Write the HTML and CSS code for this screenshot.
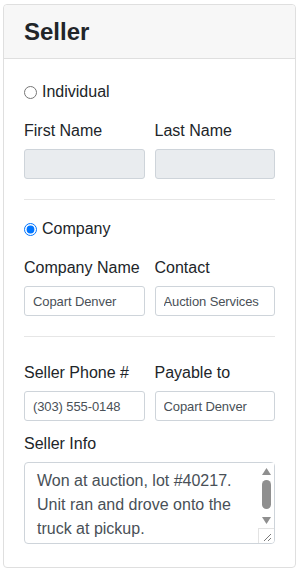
FILE: index.html
```html
<!DOCTYPE html>
<html lang="en">

<head>
  <meta charset="UTF-8" />
  <meta name="viewport" content="width=device-width, initial-scale=1" />
  <title>Seller</title>

  <link rel="stylesheet" href="styles.css">
</head>

<body>

  <div class="card">
    <div class="card-header">
      <h4>Seller</h4>
    </div>

    <div class="card-body">
      <label class="radio">
        <input type="radio" name="seller_type" value="individual" />
        Individual
      </label>

      <div class="form-row">
        <div class="field">
          <label>First Name</label>
          <input type="text" class="input" disabled />
        </div>
        <div class="field">
          <label>Last Name</label>
          <input type="text" class="input" disabled />
        </div>
      </div>

      <hr />

      <label class="radio">
        <input type="radio" name="seller_type" value="company" checked />
        Company
      </label>

      <div class="form-row">
        <div class="field">
          <label>Company Name</label>
          <input type="text" class="input" value="Copart Denver" />
        </div>
        <div class="field">
          <label>Contact</label>
          <input type="text" class="input" value="Auction Services" />
        </div>
      </div>

      <hr />

      <div class="form-row phone-row">
        <div class="field">
          <label>Seller Phone #</label>
          <input type="text" class="input" value="(303) 555-0148" />
        </div>
        <div class="field">
          <label>Payable to</label>
          <input type="text" class="input" value="Copart Denver" />
        </div>
      </div>

      <div class="field info">
        <label>Seller Info</label>
        <div class="notes-wrap">
          <textarea class="notes">Won at auction, lot #40217. Unit ran and drove onto the truck at pickup.</textarea>
          <!-- scrollbar drawn by hand, the headless browser hides the real one -->
          <div class="scrollbar">
            <svg class="arrow" width="9" height="7" viewBox="0 0 9 7"><polygon points="0,7 9,7 4.5,0" /></svg>
            <div class="thumb"></div>
            <svg class="arrow down" width="9" height="7" viewBox="0 0 9 7"><polygon points="0,0 9,0 4.5,7" /></svg>
          </div>
          <div class="corner">
            <svg width="14" height="14" viewBox="0 0 14 14">
              <line x1="12" y1="5" x2="5" y2="12" />
              <line x1="12" y1="9" x2="9" y2="12" />
            </svg>
          </div>
        </div>
      </div>
    </div>
  </div>

</body>
</html>
```

FILE: styles.css
```css
* {
  box-sizing: border-box;
}

body {
  font-family: "Liberation Sans", Arial, sans-serif;
  font-size: 16px;
  line-height: 24px;
  color: #212529;
  background: #ffffff;
  margin: 4px 5px 0 3px;
}

.card {
  border: 1px solid #dfdfdf;
  border-radius: 4px;
  background: #ffffff;
}

.card-header {
  background: #f7f7f7;
  border-bottom: 1px solid #dfdfdf;
  padding: 12px 20px;
  border-radius: 4px 4px 0 0;
}

.card-header h4 {
  margin: 0;
  font-size: 24px;
  line-height: 29px;
  font-weight: bold;
}

.card-body {
  padding: 20px 20px 23px;
}

.radio {
  display: flex;
  align-items: center;
  padding-top: 2px;
  line-height: 22px;
}

.radio input {
  margin: 0 5px 0 0;
  width: 13px;
  height: 13px;
}

.form-row {
  display: flex;
  gap: 10px;
  margin-top: 16px;
}

.field {
  flex: 1;
  min-width: 0;
}

.field label {
  display: block;
  margin-bottom: 6px;
}

.input {
  display: block;
  width: 100%;
  height: 30px;
  padding: 4px 8px;
  font-family: inherit;
  font-size: 13px;
  letter-spacing: -0.1px;
  color: #495057;
  background: #ffffff;
  border: 1px solid #ced4da;
  border-radius: 3px;
}

.input:disabled {
  background: #e9ecef;
}

hr {
  border: 0;
  border-top: 1px solid #e6e6e6;
  margin: 20px 0 16px;
}

.phone-row {
  margin-top: 24px;
}

.info {
  margin-top: 11px;
}

.notes-wrap {
  position: relative;
}

.notes {
  display: block;
  width: 100%;
  height: 82px;
  padding: 6px 27px 6px 12px;
  font-family: inherit;
  font-size: 16px;
  line-height: 24px;
  color: #495057;
  border: 1px solid #ced4da;
  border-radius: 4px;
  resize: none;
  overflow: hidden;
}

.scrollbar {
  position: absolute;
  top: 1px;
  right: 1px;
  width: 15px;
  height: 66px;
  display: flex;
  flex-direction: column;
  align-items: center;
  padding-top: 5px;
  background: #ffffff;
}

.arrow {
  display: block;
  fill: #8f8f8f;
}

.thumb {
  width: 9px;
  height: 29px;
  margin: 5px 0 8px;
  background: #8f8f8f;
  border-radius: 5px;
}

.corner {
  position: absolute;
  right: 1px;
  bottom: 1px;
  width: 16px;
  height: 15px;
  background: #ffffff;
  border-top: 1px solid #e3e3e3;
  border-left: 1px solid #e3e3e3;
  border-bottom-right-radius: 3px;
}

.corner svg {
  display: block;
  stroke: #7a7a7a;
  stroke-width: 1;
}
```
